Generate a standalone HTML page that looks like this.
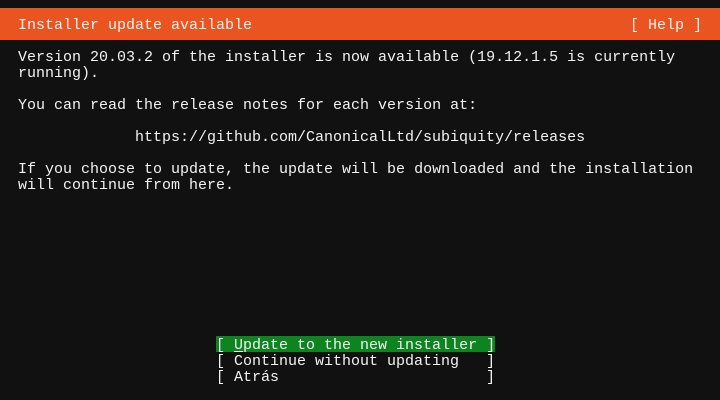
<!DOCTYPE html>
<html><head><meta charset="utf-8"><style>
html,body{margin:0;padding:0;}
body{width:720px;height:400px;background:#111111;position:relative;overflow:hidden;
font-family:"Liberation Mono",monospace;font-size:15px;color:#f2f2f2;}
.l{position:absolute;white-space:pre;line-height:16px;height:16px;margin-top:2px;}
.bar{position:absolute;left:0;top:8px;width:720px;height:32px;background:#e95420;}
.btn{background:#0e8420;}
.bg{position:absolute;left:216px;top:336px;width:279px;height:16px;background:#0e8420;}
u{text-decoration:underline;text-underline-offset:2px;}
</style></head><body>
<div class="bar"></div>
<div class="bg"></div>
<div class="l" style="left:18px;top:16px">Installer update available</div>
<div class="l" style="left:630px;top:16px">[ Help ]</div>
<div class="l" style="left:18px;top:48px">Version 20.03.2 of the installer is now available (19.12.1.5 is currently</div>
<div class="l" style="left:18px;top:64px">running).</div>
<div class="l" style="left:18px;top:96px">You can read the release notes for each version at:</div>
<div class="l" style="left:135px;top:128px">https://github.com/CanonicalLtd/subiquity/releases</div>
<div class="l" style="left:18px;top:160px">If you choose to update, the update will be downloaded and the installation</div>
<div class="l" style="left:18px;top:176px">will continue from here.</div>
<div class="l" style="left:216px;top:336px;width:279px;height:14px">[ <u>U</u>pdate to the new installer ]</div>
<div class="l" style="left:216px;top:352px">[ Continue without updating   ]</div>
<div class="l" style="left:216px;top:368px">[ Atrás                       ]</div>
</body></html>
